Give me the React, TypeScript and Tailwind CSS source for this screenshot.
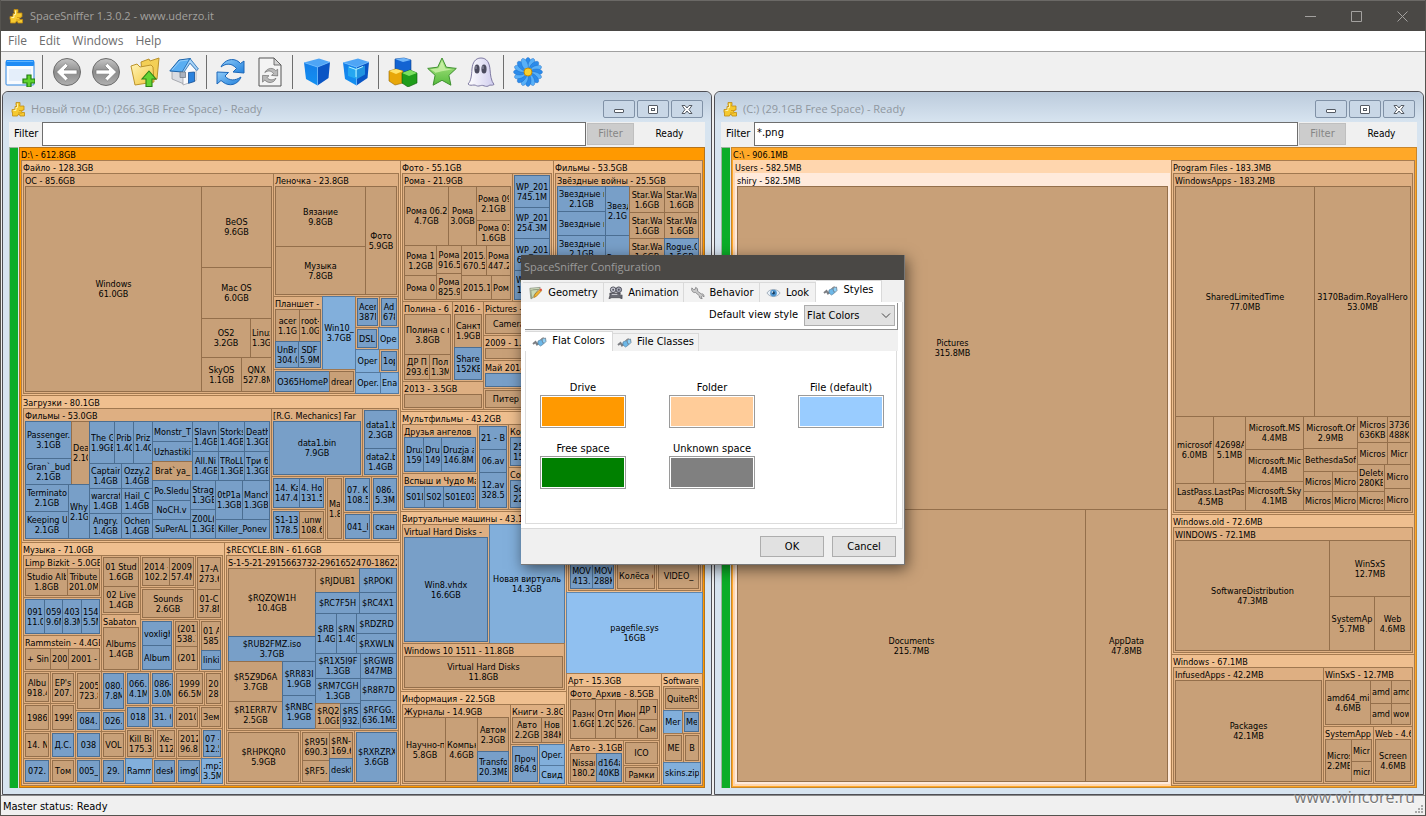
import React, { ReactNode } from 'react'
import clsx from 'clsx'

// ---------------------------------------------------------------- tree map

type Kind = 'row' | 'col' | 'box' | 'dir' | 'file'

interface Cell {
  kind: Kind
  size: number
  name?: string
  bytes?: string
  kids?: Cell[]
  glow?: boolean
}

const row = (size: number, ...kids: Cell[]): Cell => ({ kind: 'row', size, kids })
const col = (size: number, ...kids: Cell[]): Cell => ({ kind: 'col', size, kids })
// expanded folder, an empty name leaves no room for the caption
const box = (size: number, name: string, kid: Cell): Cell => ({
  kind: 'box',
  size,
  name,
  kids: [kid],
})
const glow = (cell: Cell): Cell => ({ ...cell, glow: true })
const dir = (size: number, name = '', bytes = ''): Cell => ({
  kind: 'dir',
  size,
  name,
  bytes,
})
const file = (size: number, name = '', bytes = ''): Cell => ({
  kind: 'file',
  size,
  name,
  bytes,
})
const mdir = (size: number, name = '', bytes = '') =>
  box(size, '', dir(1, name, bytes))
const mfile = (size: number, name = '', bytes = '') =>
  box(size, '', file(1, name, bytes))

const BOX_TONES = [
  'bg-[#ff9900] border-[#b5741c]',
  'bg-[#efbf8f] border-[#a87c50]',
  'bg-[#deaf82] border-[#a07850]',
  'bg-[#deaf82] border-[#987048]',
]
const GLOW_TONES = [
  'bg-[#ffa828] border-[#c8862c]',
  'bg-[#ffd6ae] border-[#ffd6ae]',
  'bg-[#ffeadb] border-[#ffeadb]',
  'bg-[#ffeadb] border-[#ffeadb]',
]
const FILE_TONES = [
  'bg-[#90c0f0] border-[#5f85ab]',
  'bg-[#90c0f0] border-[#5f85ab]',
  'bg-[#82afdb] border-[#54799f]',
  'bg-[#789fc8] border-[#4b6e92]',
]

const tracks = (kids: Cell[]) =>
  kids.map((k) => `minmax(0,${k.size}fr)`).join(' ')

const TreeCell = ({ cell, depth }: { cell: Cell; depth: number }) => {
  const level = Math.min(depth, 3)
  const kids = cell.kids ?? []

  if (cell.kind === 'row' || cell.kind === 'col') {
    return (
      <div
        className="grid min-h-0 min-w-0"
        style={
          cell.kind === 'row'
            ? {
                gridTemplateColumns: tracks(kids),
                gridTemplateRows: 'minmax(0,1fr)',
              }
            : {
                gridTemplateRows: tracks(kids),
                gridTemplateColumns: 'minmax(0,1fr)',
              }
        }
      >
        {kids.map((k, i) => (
          <TreeCell key={i} cell={k} depth={depth} />
        ))}
      </div>
    )
  }

  if (cell.kind === 'box') {
    return (
      <div
        className={clsx(
          '-mt-px -ml-px flex min-h-0 min-w-0 flex-col border pr-px pb-px',
          cell.name ? 'pt-0' : 'pt-px',
          cell.glow ? GLOW_TONES[level] : BOX_TONES[level],
        )}
      >
        {cell.name && (
          <div className="h-3 shrink-0 overflow-hidden pl-px leading-[14px] whitespace-nowrap">
            {cell.name}
          </div>
        )}
        <div className="grid min-h-0 flex-1 grid-cols-[minmax(0,1fr)] grid-rows-[minmax(0,1fr)] pt-px pl-0.5">
          <TreeCell cell={kids[0]} depth={depth + 1} />
        </div>
      </div>
    )
  }

  return (
    <div
      className={clsx(
        '-mt-px -ml-px flex min-h-0 min-w-0 flex-col justify-center overflow-hidden border px-px',
        cell.kind === 'file'
          ? FILE_TONES[level]
          : 'border-[#946f4b] bg-[#c8a078]',
      )}
    >
      {cell.name && (
        <div className="overflow-hidden text-center whitespace-nowrap">
          {cell.name}
          {cell.bytes && (
            <>
              <br />
              {cell.bytes}
            </>
          )}
        </div>
      )}
    </div>
  )
}

const files1 = box(
  235,
  'Файло - 128.3GB',
  row(
    1,
    box(
      250,
      'ОС - 85.6GB',
      row(
        1,
        dir(176, 'Windows', '61.0GB'),
        col(
          70,
          dir(81, 'BeOS', '9.6GB'),
          dir(51, 'Mac OS', '6.0GB'),
          row(39, dir(49, 'OS2', '3.2GB'), dir(21, 'Linux', '1.3GB')),
          row(34, dir(40, 'SkyOS', '1.1GB'), dir(30, 'QNX', '527.8M')),
        ),
      ),
    ),
    col(
      125,
      box(
        123,
        'Леночка - 23.8GB',
        row(
          1,
          col(90, dir(60, 'Вязание', '9.8GB'), dir(48, 'Музыка', '7.8GB')),
          dir(31, 'Фото', '5.9GB'),
        ),
      ),
      row(
        97,
        col(
          82,
          row(
            73,
            box(
              49,
              'Планшет -',
              col(
                1,
                row(32, dir(24, 'acer', '1.1G'), dir(21, 'root-', '1.0G')),
                row(26, file(23, 'UnBr', '304.0'), file(22, 'SDF', '5.9M')),
              ),
            ),
            file(33, 'Win10_', '3.7GB'),
          ),
          box(24, '', row(1, file(54, 'O365HomeP'), dir(24, 'dream'))),
        ),
        col(
          43,
          row(31, mfile(24, 'Acer', '387M'), mfile(19, 'Ad', '678')),
          row(22, mfile(23, 'DSL'), file(20, 'Oper')),
          row(23, file(24, 'Oper'), mfile(19, '1op')),
          row(21, file(25, 'Oper.'), file(18, 'Ena')),
        ),
      ),
    ),
  ),
)

const downloads = box(
  147,
  'Загрузки - 80.1GB',
  row(
    1,
    box(
      248,
      'Фильмы - 53.0GB',
      row(
        1,
        col(
          64,
          row(
            63,
            col(46, file(37, 'Passenger.', '3.1GB'), file(26, 'Gran`_bud', '2.1GB')),
            dir(18, 'Dea', '2.1G'),
          ),
          row(
            54,
            col(43, file(27, 'Terminato', '2.1GB'), file(27, 'Keeping U', '2.1GB')),
            file(21, 'Why', '2.1G'),
          ),
        ),
        col(
          63,
          row(
            42,
            file(25, 'The G', '1.9GB'),
            file(19, 'Prib', '1.4G'),
            file(19, 'Priz', '1.4G'),
          ),
          row(25, file(32, 'Captain', '1.4GB'), file(31, 'Ozzy.2', '1.4GB')),
          row(25, file(32, 'warcraf', '1.4GB'), file(31, 'Hail_C', '1.4GB')),
          row(25, file(32, 'Angry.', '1.4GB'), file(31, 'Ochen', '1.4GB')),
        ),
        col(
          117,
          row(
            59,
            col(40, file(20, 'Monstr_T'), file(20, 'Uzhastiki'), dir(19, 'Brat`ya_')),
            col(
              77,
              row(
                30,
                file(26, 'Slavn', '1.4GB'),
                file(26, 'Storks', '1.4GB'),
                file(25, 'Death', '1.3GB'),
              ),
              row(
                29,
                file(26, 'All.Ni', '1.4GB'),
                file(26, 'TRoLL', '1.3GB'),
                file(25, 'Три б', '1.3GB'),
              ),
            ),
          ),
          row(
            58,
            col(38, file(20, 'Po.Sledu'), file(19, 'NoCH.v'), file(19, 'SuPerAL')),
            col(25, file(29, 'Strag', '1.3GB'), file(29, 'Z00L(', '1.3GB')),
            col(
              54,
              row(39, file(27, '0tP1a', '1.3GB'), file(27, 'Manch', '1.3GB')),
              file(19, 'Killer_Ponev'),
            ),
          ),
        ),
      ),
    ),
    col(
      127,
      row(
        68,
        box(91, '[R.G. Mechanics] Far', file(1, 'data1.bin', '7.9GB')),
        box(36, '', col(1, file(38, 'data1.b', '2.3GB'), file(26, 'data2.b', '1.4GB'))),
      ),
      row(
        64,
        col(
          54,
          box(33, '', row(1, file(26, '14. Ka', '147.4'), file(24, '4. Ho', '131.5'))),
          box(31, '', row(1, file(26, 'S1-13', '178.5'), dir(24, '.unw', '108.6'))),
        ),
        mdir(18, 'Ma', '1.8'),
        col(28, mfile(36, '07. K', '108.5'), mfile(28, '041_H')),
        col(27, mfile(36, '086.', '5.3M'), mfile(28, 'скан')),
      ),
    ),
  ),
)

const music = box(
  203,
  'Музыка - 71.0GB',
  col(
    1,
    row(
      116,
      col(
        78,
        box(
          42,
          'Limp Bizkit - 5.0GB',
          row(1, dir(42, 'Studio Alb', '1.8GB'), dir(32, 'Tribute', '201.0M')),
        ),
        box(
          38,
          '',
          row(
            1,
            file(19, '091', '11.0'),
            file(18, '059', '9.6M'),
            file(19, '403', '8.3M'),
            file(18, '154', '5.5M'),
          ),
        ),
        box(
          36,
          'Rammstein - 4.4GB',
          row(1, dir(25, '+ Sin'), dir(18, '200'), dir(31, '2001 -')),
        ),
      ),
      col(
        39,
        box(59, '', col(1, dir(29, '01 Stud', '1.6GB'), dir(26, '02 Live', '1.4GB'))),
        box(57, 'Sabaton', dir(1, 'Albums', '1.4GB')),
      ),
      col(
        82,
        row(
          64,
          col(
            55,
            box(32, '', row(1, dir(27, '2014 -', '102.2'), dir(24, '2009', '57.4M'))),
            mdir(32, 'Sounds', '2.6GB'),
          ),
          box(27, '', col(1, dir(32, '17-A', '273.6'), dir(28, '01-C', '37.8M'))),
        ),
        row(
          52,
          box(33, '', col(1, file(24, 'voxligh'), file(24, 'Album'))),
          box(26, '', col(1, dir(25, '(201', '538.1'), dir(23, '(201'))),
          box(23, '', col(1, dir(29, '01 A', '585'), file(19, 'linki'))),
        ),
      ),
    ),
    row(
      112,
      col(
        52,
        row(32, mdir(27, 'Albu', '918.4'), mdir(25, "EP's", '207.5')),
        row(28, mdir(27, '1986'), mdir(25, '1999')),
        row(27, mdir(27, '14. N'), mfile(25, 'Д.С.')),
        row(25, mfile(27, '072.'), mdir(25, 'Том')),
      ),
      col(
        50,
        row(39, mdir(26, '2005', '723.8'), mfile(24, '080.', '7.8M')),
        row(21, mfile(26, '084.'), mfile(24, '026.')),
        row(27, mfile(26, '038'), mdir(24, 'VOL')),
        row(25, mfile(26, '005_'), mfile(24, '29.')),
      ),
      col(
        97,
        row(
          34,
          mfile(25, '066.', '4.1M'),
          mfile(24, '086-', '3.0M'),
          mdir(30, '1999', '66.5M'),
          mdir(18, '20', '28'),
        ),
        row(23, mfile(25, '018'), mfile(24, '31. C'), mdir(25, '2010'), mdir(23, 'Зем')),
        row(
          30,
          mdir(30, 'Kill Bi', '175.3'),
          mdir(21, 'Xe-', '112'),
          mdir(25, '2012', '96.8'),
          mfile(21, '07 -', '12.5'),
        ),
        row(25, file(27, 'Ramm'), mfile(24, 'desk'), mfile(25, 'img0'), file(21, '.mp3', '3.5M')),
      ),
    ),
  ),
)

const recycle = box(
  176,
  '$RECYCLE.BIN - 61.6GB',
  col(
    1,
    box(
      175,
      'S-1-5-21-2915663732-2961652470-18622',
      row(
        1,
        col(
          87,
          dir(68, '$RQZQW1H', '10.4GB'),
          file(25, '$RUB2FMZ.iso', '3.7GB'),
          row(
            67,
            col(54, dir(40, '$R5Z9D6A', '3.7GB'), dir(27, '$R1ERR7V', '2.5GB')),
            col(33, file(34, '$RR83I', '1.9GB'), file(33, '$RNBC', '1.9GB')),
          ),
        ),
        col(
          81,
          row(24, dir(44, '$RJDUB1'), file(37, '$RPOKI')),
          row(21, file(44, '$RC7F5H'), file(37, '$RC4X1')),
          row(
            40,
            file(21, '$RB', '1.4G'),
            file(20, '$RN', '1.4G'),
            col(40, file(20, '$RDZRD'), file(20, '$RXWLN')),
          ),
          row(
            75,
            col(
              45,
              file(25, '$R1X5I9F', '1.3GB'),
              file(25, '$RM7CGH', '1.3GB'),
              row(25, dir(25, '$RQ2', '1.0GB'), file(20, '$RS', '932.')),
            ),
            col(
              36,
              file(25, '$RGWB', '847MB'),
              file(22, '$R8R7D'),
              file(28, '$RFGG.', '636.1MB'),
            ),
          ),
        ),
      ),
    ),
    row(
      53,
      mdir(74, '$RHPKQR0', '5.9GB'),
      box(
        54,
        '',
        row(
          1,
          col(27, dir(28, '$R95I', '690.3'), dir(21, '$RF5.')),
          col(23, dir(26, '$RN-', '169.6'), file(23, 'deskt')),
        ),
      ),
      mfile(44, '$RXRZRX', '3.6GB'),
    ),
  ),
)

const photos = box(
  153,
  'Фото - 55.1GB',
  col(
    1,
    row(
      128,
      box(
        110,
        'Рома - 21.9GB',
        col(
          1,
          row(
            59,
            dir(44, 'Рома 06.2', '4.7GB'),
            dir(28, 'Рома', '3.0GB'),
            col(34, dir(34, 'Рома 09', '2.1GB'), dir(25, 'Рома 03', '1.6GB')),
          ),
          row(
            54,
            col(32, dir(30, 'Рома 1', '1.2GB'), dir(24, 'Рома 0')),
            col(25, dir(28, 'Рома', '916.5'), dir(26, 'Рома', '825.9')),
            col(
              49,
              row(30, dir(25, '2015.', '670.5'), dir(24, 'Рома', '447.2')),
              row(24, dir(30, '2015.1'), dir(19, 'Ром')),
            ),
          ),
        ),
      ),
      box(
        39,
        '',
        col(
          1,
          file(32, 'WP_201', '745.1M'),
          file(31, 'WP_201', '254.3M'),
          file(32, 'WP_201', '61.4MB'),
          file(29, 'WP_201', '12.8MB'),
        ),
      ),
    ),
    row(
      108,
      col(
        81,
        row(
          80,
          box(
            50,
            'Полина - 6',
            col(
              1,
              dir(40, 'Полина с п', '3.8GB'),
              row(25, dir(25, 'ДР П', '293.6'), dir(21, 'Пол', '1.3M')),
            ),
          ),
          box(31, '2016 -', col(1, dir(33, 'Санкт', '1.9GB'), file(32, 'Share', '152KB'))),
        ),
        box(28, '2013 - 3.5GB', dir(1)),
      ),
      col(
        68,
        box(34, 'Pictures -', dir(1, 'Camera Roll')),
        box(25, '2009 - 1.1GB', dir(1)),
        box(28, 'Май 2014', file(1)),
        mdir(21, 'Питер 2014'),
      ),
    ),
  ),
)

const movies = box(
  149,
  'Фильмы - 53.5GB',
  col(
    1,
    box(
      108,
      'Звёздные войны - 25.5GB',
      row(
        1,
        col(
          48,
          file(25, 'Звездные в', '2.1GB'),
          file(24, 'Звездные в'),
          file(27, 'Звездные в', '2.1GB'),
          file(17),
        ),
        col(24, file(49, 'Звезд', '2.1G'), file(44, 'Звезд')),
        col(
          69,
          row(26, dir(35, 'Star.Wa', '1.6GB'), dir(34, 'Star.Wa', '1.6GB')),
          row(26, dir(35, 'Star.Wa', '1.6GB'), dir(34, 'Star.Wa', '1.6GB')),
          row(26, dir(35, 'Star.Wa', '1.6GB'), file(34, 'Rogue.O', '1.5GB')),
          row(15, dir(35), dir(34)),
        ),
      ),
    ),
    box(128, '', row(1, dir(80), file(61))),
  ),
)

const rightHalf = col(
  302,
  row(251, photos, movies),
  row(
    374,
    col(
      166,
      box(
        100,
        'Мультфильмы - 43.2GB',
        row(
          1,
          col(
            75,
            box(
              49,
              'Друзья ангелов',
              row(
                1,
                file(19, 'Druz', '159'),
                file(18, 'Dru', '149'),
                file(34, 'Druzja a', '146.8M'),
              ),
            ),
            box(
              36,
              'Вспыш и Чудо Ма',
              row(1, file(20, 'S01E'), file(19, 'S02'), file(32, 'S01E03')),
            ),
          ),
          box(
            31,
            '',
            col(1, file(23, '21 - В'), file(23, '06.av'), file(35, '12.av', '328.5')),
          ),
          col(
            56,
            box(43, 'Кот', row(1, file(16, '25', '15'), file(36))),
            box(42, 'Соб', row(1, file(16, 'So', '22'), file(36))),
          ),
        ),
      ),
      box(
        180,
        'Виртуальные машины - 43.1GB',
        col(
          1,
          row(
            119,
            box(87, 'Virtual Hard Disks -', file(1, 'Win8.vhdx', '16.6GB')),
            file(75, 'Новая виртуаль', '14.3GB'),
          ),
          box(46, 'Windows 10 1511 - 11.8GB', dir(1, 'Virtual Hard Disks', '11.8GB')),
        ),
      ),
      box(
        94,
        'Информация - 22.5GB',
        row(
          1,
          box(
            108,
            'Журналы - 14.9GB',
            row(
              1,
              dir(41, 'Научно-п', '5.8GB'),
              dir(32, 'Компью', '4.6GB'),
              col(31, dir(34, 'Автом', '2.3GB'), file(30, 'Transfo', '20.3MB')),
            ),
          ),
          col(
            54,
            box(40, 'Книги - 3.8GB', row(1, dir(29, 'Авто', '2.2GB'), dir(21, 'Нов', '384K'))),
            row(
              39,
              mfile(29, 'Проч', '864.9'),
              col(25, file(21, 'Oper.'), file(18, 'Свид')),
            ),
          ),
        ),
      ),
    ),
    col(
      136,
      box(
        181,
        '',
        col(
          1,
          file(149),
          row(
            29,
            box(47, '', row(1, file(22, 'MOV', '413.'), file(21, 'MOV', '288K'))),
            mdir(41, 'Колёса о'),
            mdir(44, 'VIDEO_'),
          ),
        ),
      ),
      file(81, 'pagefile.sys', '16GB'),
      row(
        112,
        box(
          95,
          'Арт - 15.3GB',
          col(
            1,
            box(
              54,
              'Фото_Архив - 8.5GB',
              row(
                1,
                dir(25, 'Разно', '1.6GB'),
                dir(20, 'Отп', '1.2GB'),
                dir(22, 'Июн', '526.1'),
                col(20, dir(20, 'ДР Т'), dir(19, 'Сам')),
              ),
            ),
            row(
              43,
              box(55, 'Авто - 3.1GB', row(1, dir(26, 'Nissan', '180.2'), file(25, 'd164a', '40KB'))),
              col(36, mdir(25, 'ICO'), mdir(18, 'Рамки')),
            ),
          ),
        ),
        box(
          41,
          'Software',
          col(
            1,
            mdir(24, 'QuiteRS'),
            row(23, file(19, 'Mer'), mfile(18, 'Me')),
            row(29, mdir(20, 'ME'), mdir(17, 'В')),
            file(21, 'skins.zip'),
          ),
        ),
      ),
    ),
  ),
)

const driveD = box(
  1,
  'D:\\ - 612.8GB',
  row(1, col(379, files1, downloads, row(243, music, recycle)), rightHalf),
)

const driveC = glow(
  box(
    1,
    'C:\\ - 906.1MB',
    row(
      1,
      glow(
        box(
          438,
          'Users - 582.5MB',
          glow(
            box(
              1,
              'shiry - 582.5MB',
              col(
                1,
                dir(323, 'Pictures', '315.8MB'),
                row(272, dir(348, 'Documents', '215.7MB'), dir(82, 'AppData', '47.8MB')),
              ),
            ),
          ),
        ),
      ),
      col(
        243,
        box(
          354,
          'Program Files - 183.3MB',
          box(
            1,
            'WindowsApps - 183.2MB',
            col(
              1,
              row(
                230,
                dir(139, 'SharedLimitedTime', '77.0MB'),
                dir(96, '3170Badim.RoyalHero', '53.0MB'),
              ),
              row(
                94,
                col(
                  70,
                  row(67, dir(38, 'microsoft', '6.0MB'), dir(32, '42698A', '5.1MB')),
                  dir(27, 'LastPass.LastPas', '4.5MB'),
                ),
                col(
                  58,
                  dir(33, 'Microsoft.MS', '4.4MB'),
                  dir(32, 'Microsoft.Mic', '4.4MB'),
                  dir(29, 'Microsoft.Sky', '4.1MB'),
                ),
                col(
                  54,
                  dir(32, 'Microsoft.Of', '2.9MB'),
                  dir(23, 'BethesdaSoft'),
                  row(20, dir(29, 'Micros'), dir(25, 'Micro')),
                  row(19, dir(29, 'Micros'), dir(25, 'Micro')),
                ),
                col(
                  53,
                  row(26, dir(30, 'Micros', '636KB'), dir(23, '3736', '488K')),
                  row(22, dir(30, 'Micros'), dir(23, 'Micr')),
                  row(
                    46,
                    col(27, dir(27, 'Delete', '280KB'), dir(19, 'Micros')),
                    col(26, dir(24, 'Micro'), dir(22, 'Micro')),
                  ),
                ),
              ),
            ),
          ),
        ),
        box(
          140,
          'Windows.old - 72.6MB',
          box(
            1,
            'WINDOWS - 72.1MB',
            row(
              1,
              dir(154, 'SoftwareDistribution', '47.3MB'),
              col(
                81,
                dir(56, 'WinSxS', '12.7MB'),
                row(54, dir(45, 'SystemAp', '5.7MB'), dir(36, 'Web', '4.6MB')),
              ),
            ),
          ),
        ),
        box(
          131,
          'Windows - 67.1MB',
          row(
            1,
            box(150, 'InfusedApps - 42.2MB', dir(1, 'Packages', '42.1MB')),
            col(
              89,
              box(
                59,
                'WinSxS - 12.7MB',
                row(
                  1,
                  dir(45, 'amd64_mi', '4.6MB'),
                  col(21, dir(23, 'amd'), dir(21, 'amd')),
                  col(19, dir(23, 'amd'), dir(21, 'wow')),
                ),
              ),
              row(
                57,
                box(
                  50,
                  'SystemApp',
                  row(1, dir(26, 'Micros', '2.2MB'), col(20, dir(22, 'Micr'), dir(20, 'micr'))),
                ),
                box(39, 'Web - 4.6', dir(1, 'Screen', '4.6MB')),
              ),
            ),
          ),
        ),
      ),
    ),
  ),
)

// ------------------------------------------------------------------- icons

const PuzzleIcon = () => (
  <svg width="15" height="16" viewBox="0 0 15 16" aria-hidden="true">
    <path
      d="M4 5.500h2L5 4V1.500h4V4L8.500 5H13v4h-1.500l-1 1 .5 1.500h2.500V15H9l-.5-1.500H7L6.500 15H1.500v-3.500H1V8.500h2L4 8z"
      fill="#f5c92f"
      stroke="#c08b12"
      strokeWidth=".8"
    />
    <path d="M6.500 2.500v4H5v3H2.500" fill="none" stroke="#fff3a8" />
    <path d="M7 12h4M8 9.500h4" fill="none" stroke="#d69d18" />
  </svg>
)

const NewViewIcon = () => (
  <>
    <rect x="1" y="4" width="28" height="24" rx="1" fill="#f8fbfe" stroke="#2f86e0" />
    <rect x="1" y="3" width="28" height="6" rx="1" fill="#1f8cf5" />
    <path d="M2 4.500h26" stroke="#5fb4ff" />
    <path d="M4 12h22v12H4z" fill="#e4eefa" />
    <path
      d="M22 18h4v4h4v4h-4v4h-4v-4h-4v-4h4z"
      fill="#5fd32f"
      stroke="#1f7d12"
      strokeWidth="1.2"
    />
  </>
)

const ArrowIcon = ({ flip }: { flip?: boolean }) => (
  <g transform={flip ? 'matrix(-1 0 0 1 30 0)' : undefined}>
    <circle cx="15" cy="15" r="13.500" fill="url(#gray)" stroke="#6c6c6c" />
    <path
      d="M4.500 15 13.500 6.300l2.700 2.500-4.200 4.200H25v4.200H12l4.200 4.200-2.700 2.500z"
      fill="#fff"
      stroke="#777"
      strokeWidth=".7"
    />
  </g>
)

const FolderUpIcon = () => (
  <>
    <path d="M11 5l8-3 1 2 9-3-2 21-14 3z" fill="#f3cf55" stroke="#b9912c" />
    <path d="M1 9l6-2 3 3 11-2 2 2 1 15-19 3z" fill="url(#folder)" stroke="#bd942b" />
    <path
      d="M19 14l7 8h-4v7.500h-6V22h-4z"
      fill="#63d433"
      stroke="#2a8216"
      strokeWidth="1.100"
    />
  </>
)

const HomeIcon = () => (
  <>
    <path d="M3 13h12v14L3 22z" fill="#d9dce2" stroke="#8c8f96" strokeWidth=".7" />
    <path d="M14 14l7-8 6 7v10.500L14 28z" fill="#fafafc" stroke="#9799a0" strokeWidth=".7" />
    <path d="M.8 14 10 3l11.500-1.500L13.500 15z" fill="#5aaef2" stroke="#1c62a8" />
    <path d="M3 13l8-9 8-1" fill="none" stroke="#a6d6fb" strokeWidth=".8" />
    <path
      d="M21 1.500 29.400 12l-1.700 1.500L21 6.200 14.700 15.500l-1.400-.700z"
      fill="#a8d4f8"
      stroke="#1f69b2"
      strokeWidth=".8"
    />
    <path d="M19.500 15.500 25.500 15v9.500l-6 1.800z" fill="#2c83de" stroke="#134f95" strokeWidth=".8" />
    <path d="M11 15h5.500v5.500H11z" fill="#aab2bf" stroke="#6f7580" strokeWidth=".7" />
  </>
)

const RefreshPaths = () => (
  <>
    <path
      d="M5 10C8 3 17 0 23 5l1.500 1.500L28 4v12l-11-1 3.500-3.500C16 6 10 6 5 10z"
      strokeWidth="1"
    />
    <path
      d="M25 20c-3 8-12 10-18 5l-2-1.500L1 27V15l11.500.500L9 19c4 5 10 5 16 1z"
      strokeWidth="1"
    />
  </>
)

const CubePaths = () => (
  <>
    <path d="M2 5.500 17 1.500l11 3.500-12.500 5z" fill="#4fa5f5" />
    <path d="M2 5.500l13.500 4.500v18.500L4 22z" fill="url(#cubeL)" />
    <path d="M28 5l-12.500 5v18.500L26.500 21z" fill="#0a55c4" />
    <path d="M2 5.500l13.500 4.500L28 5M15.500 10v18" fill="none" stroke="#6dbcff" strokeWidth=".8" />
  </>
)

const GhostIcon = () => (
  <>
    <path
      d="M15 1C9 1 6.500 6 6 12c-.5 7-1 12-4 15 2 2 4 1 6 1s3 1.500 5 1 3-1 5-.2 4 .8 5-.3 3 .5 5-1c-3-4-3.500-9-4-15C23.500 6 21 1 15 1z"
      fill="url(#ghost)"
      stroke="#7f7aa2"
    />
    <ellipse cx="11" cy="12" rx="2.600" ry="4.600" fill="#4b4b5e" />
    <ellipse cx="18" cy="12" rx="2.600" ry="4.600" fill="#4b4b5e" />
    <path d="M10 9v3M17 9v3" stroke="#9b9bb2" />
  </>
)

const FlowerIcon = () => (
  <>
    {Array.from({ length: 16 }, (_, i) => (
      <ellipse
        key={i}
        cx="15"
        cy="6.500"
        rx="3"
        ry="6"
        fill={i % 2 ? '#58b0f8' : '#2b8bea'}
        stroke="#1a68c4"
        strokeWidth=".4"
        transform={`rotate(${i * 22.5} 15 15)`}
      />
    ))}
    <circle cx="15" cy="15" r="4" fill="#f8cf2c" stroke="#c38b0c" />
  </>
)

const TOOLS: { label: string; sep?: boolean; art: ReactNode }[] = [
  { label: 'New view', art: <NewViewIcon /> },
  { label: 'Back', sep: true, art: <ArrowIcon /> },
  { label: 'Forward', art: <ArrowIcon flip /> },
  { label: 'Go to parent', art: <FolderUpIcon /> },
  { label: 'Home', art: <HomeIcon /> },
  {
    label: 'Rescan',
    sep: true,
    art: (
      <g fill="url(#sync)" stroke="#1c67b8">
        <RefreshPaths />
      </g>
    ),
  },
  {
    label: 'Rescan file',
    art: (
      <>
        <path d="M4 1h15l7 7v21H4z" fill="#f4f4f4" stroke="#555" />
        <path d="M19 1v7h7z" fill="#d4d4d4" stroke="#555" strokeWidth=".8" />
        <g
          fill="#b9b9b9"
          stroke="#555"
          strokeWidth="1.500"
          transform="translate(7 10) scale(.56)"
        >
          <RefreshPaths />
        </g>
      </>
    ),
  },
  { label: 'Less detail', sep: true, art: <CubePaths /> },
  {
    label: 'More detail',
    art: (
      <>
        <CubePaths />
        <path d="M7 9l8 2.500 9-3v9L16 22l-9-3z" fill="#30bdf4" opacity=".6" />
        <path d="M8 10l7 2.500V20M15 12.500l7-3" fill="none" stroke="#b4f0ff" />
      </>
    ),
  },
  {
    label: 'File classes',
    sep: true,
    art: (
      <>
        <path d="M7 2l9-1 7 2v10l-8 3-8-3z" fill="#1363d2" stroke="#0b3f8c" strokeWidth=".6" />
        <path d="M7 2l9-1 7 2-8 2z" fill="#71b6fa" />
        <path d="M1 14l7-2 7 2v12l-8 2-6-4z" fill="#e8a709" stroke="#966500" strokeWidth=".6" />
        <path d="M1 14l7-2 7 2-7 3z" fill="#ffe36a" />
        <path d="M14 16l8-3 7 3v10l-9 4-6-4z" fill="#1f9d1b" stroke="#0c5d0c" strokeWidth=".6" />
        <path d="M14 16l8-3 7 3-8 3z" fill="#7ce061" />
      </>
    ),
  },
  {
    label: 'Filter',
    art: (
      <>
        <path
          d="M15 1l4.300 9.200 10 1.200-7.400 6.900 2 9.900L15 23.300 6.100 28.200l2-9.900L.7 11.400l10-1.200z"
          fill="url(#star)"
          stroke="#3f9130"
          strokeLinejoin="round"
        />
        <path d="M15 4l3.300 7.500 7.500.900C19 13 10 15 5.500 17l3-1.500L3.500 12.300l8-1z" fill="#d5f5b4" opacity=".7" />
      </>
    ),
  },
  { label: 'Unknown space', art: <GhostIcon /> },
  { label: 'Configure', sep: true, art: <FlowerIcon /> },
]

const SvgDefs = () => (
  <svg width="0" height="0" className="absolute" aria-hidden="true">
    <defs>
      <linearGradient id="gray" x1="0" y1="0" x2="0" y2="1">
        <stop offset="0" stopColor="#c6c6c6" />
        <stop offset=".5" stopColor="#8d8d8d" />
        <stop offset="1" stopColor="#b0b0b0" />
      </linearGradient>
      <linearGradient id="folder" x1="0" y1="0" x2="1" y2="1">
        <stop offset="0" stopColor="#fff3b5" />
        <stop offset="1" stopColor="#f2c63c" />
      </linearGradient>
      <linearGradient id="sync" x1="0" y1="0" x2="1" y2="1">
        <stop offset="0" stopColor="#8ecaf8" />
        <stop offset="1" stopColor="#2382dc" />
      </linearGradient>
      <linearGradient id="cubeL" x1="0" y1="0" x2="0" y2="1">
        <stop offset="0" stopColor="#157ee8" />
        <stop offset="1" stopColor="#1391f2" />
      </linearGradient>
      <linearGradient id="ghost" x1="0" y1="0" x2="1" y2="0">
        <stop offset="0" stopColor="#ffffff" />
        <stop offset="1" stopColor="#cfccee" />
      </linearGradient>
      <linearGradient id="star" x1="0" y1="0" x2="0" y2="1">
        <stop offset="0" stopColor="#b4e88b" />
        <stop offset="1" stopColor="#55bb3c" />
      </linearGradient>
    </defs>
  </svg>
)

const StylesIcon = () => (
  <svg width="15" height="14" viewBox="0 0 15 14" aria-hidden="true">
    <path d="M1 9l2.500-2L5 9.500 7.500 7" fill="none" stroke="#7b7d82" strokeWidth="2" />
    <path d="M6 6l3.500-1.500L11.500 9 8.500 11 6 9z" fill="#6db8e8" stroke="#557f9f" strokeWidth=".7" />
    <path d="M10 4l3.500-1 .5 3.500L12 8.500l-1.500-2z" fill="#8fd0f5" stroke="#5d7385" strokeWidth=".7" />
    <path d="M8.500 4.500l3-2" stroke="#777" />
  </svg>
)

const GeometryIcon = () => (
  <svg width="15" height="14" viewBox="0 0 16 14" aria-hidden="true">
    <path d="M2 2l11-1-1 2-7 1-1 9H3z" fill="#d9e4c3" stroke="#76806c" strokeWidth=".7" />
    <path d="M4 13L3 4l8-1z" fill="#c9d9b4" stroke="#7d8b70" strokeWidth=".7" />
    <path d="M6 12l1.500-4L13 3l1.500 1.500L9 10.500z" fill="#f2b52e" stroke="#a07015" strokeWidth=".7" />
    <path d="M12 4l1.500-2 1.500 1-1 2z" fill="#e0503c" />
  </svg>
)

const AnimationIcon = () => (
  <svg width="15" height="14" viewBox="0 0 16 14" aria-hidden="true">
    <circle cx="5.500" cy="3.500" r="3" fill="#c7c8d2" stroke="#4c4d57" />
    <circle cx="11.500" cy="3.500" r="3" fill="#a4a6b4" stroke="#4c4d57" />
    <path d="M2 7h11v3l2-1v4l-3-1H4l-3 1 1-3z" fill="#6a6b74" stroke="#3e3f46" strokeWidth=".7" />
    <path d="M4 8.500h6" stroke="#d2d3da" />
    <circle cx="5.500" cy="3.500" r="1" fill="#50515c" />
    <circle cx="11.500" cy="3.500" r="1" fill="#50515c" />
  </svg>
)

const BehaviorIcon = () => (
  <svg width="15" height="14" viewBox="0 0 16 14" aria-hidden="true">
    <path
      d="M2 1.500l2 2 1.500-.500L6 1c2 .500 2.500 2.500 2 4l4 3c2-.500 3 1 3 3l-2-1-1 1 1 2c-2 0-3.500-1-3-3L6 6.500C3.500 7 1 5 2 1.500z"
      fill="#c9c9c9"
      stroke="#77777a"
      strokeWidth=".8"
    />
  </svg>
)

const LookIcon = () => (
  <svg width="15" height="14" viewBox="0 0 16 14" aria-hidden="true">
    <path d="M1 7c3-5 11-5 14 0-3 5-11 5-14 0z" fill="#e7f0f8" stroke="#8c9aa8" strokeWidth=".8" />
    <circle cx="8" cy="7" r="3.600" fill="#4f95cf" />
    <circle cx="8" cy="7" r="1.500" fill="#173b5c" />
    <circle cx="6.800" cy="5.800" r=".8" fill="#fff" />
  </svg>
)

// ----------------------------------------------------------------- windows

const CHILD_BUTTONS = [
  { label: 'Minimize', art: <rect x="1.500" y="5.500" width="9" height="3" rx=".5" /> },
  {
    label: 'Maximize',
    art: (
      <>
        <rect x="1.500" y="1.500" width="9" height="8" rx=".5" />
        <rect x="4.500" y="4.500" width="3" height="2" />
      </>
    ),
  },
  {
    label: 'Close',
    art: <path d="M1 1.500h3l2 2.500 2-2.500h3L8 5.500l3 4H8L6 7l-2 2.500H1l3-4z" />,
  },
]

interface ChildWindowProps {
  title: string
  filter: string
  drive: Cell
  id: string
}

const ChildWindow = ({ title, filter, drive, id }: ChildWindowProps) => (
  <section className="flex min-w-0 flex-1 flex-col rounded-t-md border border-[#4f4f55] bg-[#d7e4f0] px-1.5 pb-1.5">
    <header className="-mx-1.5 flex h-[30px] shrink-0 items-center rounded-t-md bg-linear-to-b from-[#bccbdc] to-[#d7e4f0] px-2 pt-1">
      <PuzzleIcon />
      <h2 className="ml-[5px] flex-1 truncate font-['Open_Sans','Noto_Sans',sans-serif] text-[11px] text-[#8f979f]">
        {title}
      </h2>
      <div className="flex gap-0.5">
        {CHILD_BUTTONS.map((b) => (
          <button
            key={b.label}
            aria-label={b.label}
            className="flex h-[18px] w-8 items-center justify-center rounded-[2px] border border-[#8091a6] bg-[#c9d7e6]"
          >
            <svg width="12" height="11" viewBox="0 0 12 11" fill="#fff" stroke="#555b64">
              {b.art}
            </svg>
          </button>
        ))}
      </div>
    </header>
    <div className="flex h-[25px] shrink-0 items-start bg-[#f0f0f0]">
      <label htmlFor={id} className="w-[33px] pt-1 pl-[5px] leading-4">
        Filter
      </label>
      <input
        id={id}
        defaultValue={filter}
        className="h-6 min-w-0 flex-1 border border-[#6e6e6e] bg-white px-0.5 pb-1 outline-none"
      />
      <button disabled className="mt-px ml-px h-[22px] w-[47px] border border-[#bfbfbf] bg-[#cccccc] text-[#868686]">
        Filter
      </button>
      <span className="w-[71px] pt-1 text-center text-[10px] leading-4">Ready</span>
    </div>
    <div className="flex min-h-0 flex-1">
      <div className="mr-px w-[9px] shrink-0 border-t border-l border-[#9fb39f] bg-[#0cad28]" />
      <div className="grid min-w-0 flex-1 grid-cols-[minmax(0,1fr)] grid-rows-[minmax(0,1fr)] pt-px pl-px text-[9px] leading-[10px]">
        <TreeCell cell={drive} depth={0} />
      </div>
    </div>
  </section>
)

// ------------------------------------------------------------------ dialog

const TABS = [
  { label: 'Geometry', width: 'w-[81px]', icon: <GeometryIcon /> },
  { label: 'Animation', width: 'w-20', icon: <AnimationIcon /> },
  { label: 'Behavior', width: 'w-[76px]', icon: <BehaviorIcon /> },
  { label: 'Look', width: 'w-14', icon: <LookIcon /> },
  { label: 'Styles', width: 'w-[66px]', icon: <StylesIcon />, active: true },
]

const STYLE_TABS = [
  { label: 'Flat Colors', icon: <StylesIcon />, active: true },
  { label: 'File Classes', icon: <StylesIcon /> },
]

const SWATCHES = [
  { label: 'Drive', color: 'bg-[#ff9900]' },
  { label: 'Folder', color: 'bg-[#ffcc99]' },
  { label: 'File (default)', color: 'bg-[#99ccff]' },
  { label: 'Free space', color: 'bg-[#008000]' },
  { label: 'Unknown space', color: 'bg-[#808080]' },
]

const ConfigDialog = () => (
  <div
    role="dialog"
    aria-label="SpaceSniffer Configuration"
    className="absolute top-[255px] left-1/2 -ml-48 flex w-96 flex-col border-r border-b border-[#777] bg-[#f0f0f0] shadow-[2px_4px_14px_rgba(0,0,0,0.55)]"
  >
    <h2 className="flex h-[25px] items-center bg-[#4a4845] px-[3px] font-['Open_Sans','Noto_Sans',sans-serif] text-[11px] text-[#9a9a9a]">
      SpaceSniffer Configuration
    </h2>
    <div role="tablist" className="flex h-[22px] items-end pl-0.5">
      {TABS.map((t) => (
        <button
          key={t.label}
          role="tab"
          aria-selected={!!t.active}
          className={clsx(
            'flex items-center justify-center gap-[5px] border-t border-r border-[#d9d9d9]',
            t.width,
            t.active ? 'h-[22px] bg-white pb-0.5' : 'h-5 bg-[#f2f2f2] pt-px',
          )}
        >
          {t.icon}
          {t.label}
        </button>
      ))}
    </div>
    <div className="mr-px flex flex-col border-r border-b border-[#d9d9d9] bg-white px-1 pb-1">
      <div className="mt-px flex h-[27px] items-start justify-end gap-1.5 border-r border-b border-[#8f8f8f] pr-0.5">
        <label htmlFor="view-style" className="pt-0.5 leading-5">
          Default view style
        </label>
        <div className="relative mt-0.5">
          <select
            id="view-style"
            className="h-[21px] w-[91px] appearance-none border border-[#adadad] bg-[#e1e1e1] pt-0.5 pl-0.5 outline-none"
          >
            <option>Flat Colors</option>
            <option>File Classes</option>
          </select>
          <svg
            className="pointer-events-none absolute top-2 right-1"
            width="10"
            height="6"
            viewBox="0 0 10 6"
            fill="none"
            stroke="#444"
          >
            <path d="M1 .500l4 4 4-4" />
          </svg>
        </div>
      </div>
      <div role="tablist" className="flex h-[21px] items-end bg-[#f0f0f0]">
        {STYLE_TABS.map((t) => (
          <button
            key={t.label}
            role="tab"
            aria-selected={!!t.active}
            className={clsx(
              'flex items-center justify-center gap-[5px] border-t border-r border-[#d9d9d9]',
              t.active ? 'h-5 w-[88px] bg-white' : 'h-[18px] w-[86px] bg-[#f2f2f2]',
            )}
          >
            {t.icon}
            {t.label}
          </button>
        ))}
      </div>
      <div className="mr-px grid h-[173px] grid-cols-[repeat(3,86px)] content-start gap-x-[43px] gap-y-[13px] border border-t-0 border-[#dcdcdc] pt-[29px] pl-3.5">
        {SWATCHES.map((s) => (
          <div key={s.label} className="text-center">
            <span className="block h-[15px] leading-4">{s.label}</span>
            <button
              aria-label={s.label}
              className="block h-[33px] w-full border border-[#9a9a9a] p-px"
            >
              <span className={clsx('block size-full', s.color)} />
            </button>
          </div>
        ))}
      </div>
    </div>
    <div className="flex justify-end gap-2 pt-[7px] pr-2 pb-[7px]">
      {['OK', 'Cancel'].map((label) => (
        <button
          key={label}
          className="flex h-[21px] w-16 items-center justify-center border border-[#adadad] bg-[#e1e1e1] pt-px"
        >
          {label}
        </button>
      ))}
    </div>
  </div>
)

// --------------------------------------------------------------------- app

export default function App() {
  return (
    <div className="relative flex h-screen flex-col overflow-hidden border-x border-b border-[#55534f] bg-[#f0f0f0] font-['DejaVu_Sans_Condensed','DejaVu_Sans',sans-serif] text-[11px] text-black">
      <SvgDefs />
      <header className="flex h-[31px] shrink-0 items-center border-t border-[#6b6966] bg-[#4a4845] pl-2 font-['Open_Sans','Noto_Sans',sans-serif] text-[#a3a19f]">
        <PuzzleIcon />
        <h1 className="ml-1.5 flex-1 text-[11px]">SpaceSniffer 1.3.0.2 - www.uderzo.it</h1>
        {[
          { label: 'Minimize', d: 'M0 5.500h11' },
          { label: 'Maximize', d: 'M.5.500h10v10H.5z' },
          { label: 'Close', d: 'M.5.500l10 10M10.500.500l-10 10' },
        ].map((b) => (
          <button key={b.label} aria-label={b.label} className="flex w-[46px] justify-center">
            <svg width="11" height="11" viewBox="0 0 11 11" fill="none" stroke="#a3a19f">
              <path d={b.d} />
            </svg>
          </button>
        ))}
      </header>
      <nav className="flex h-5 shrink-0 items-center gap-3 bg-white px-[7px] font-['Open_Sans','Noto_Sans',sans-serif] text-[12px] text-[#6d6d6d]">
        {['File', 'Edit', 'Windows', 'Help'].map((m) => (
          <button key={m}>{m}</button>
        ))}
      </nav>
      <div className="-ml-px flex h-10 shrink-0 items-center border-t border-[#a0a0a0]">
        {TOOLS.map((t) => (
          <React.Fragment key={t.label}>
            {t.sep && <div className="mr-1 ml-[3px] h-[34px] w-px bg-[#6e6e6e]" />}
            <button aria-label={t.label} className="flex w-[39px] justify-center">
              <svg width="30" height="30" viewBox="0 0 30 30">
                {t.art}
              </svg>
            </button>
          </React.Fragment>
        ))}
      </div>
      <main className="flex min-h-0 flex-1 gap-0.5 px-px">
        <ChildWindow
          id="filter-d"
          title="Новый том (D:) (266.3GB Free Space) - Ready"
          filter=""
          drive={driveD}
        />
        <ChildWindow
          id="filter-c"
          title="(C:) (29.1GB Free Space) - Ready"
          filter="*.png"
          drive={driveC}
        />
      </main>
      <footer className="flex h-5 shrink-0 items-center border-t border-[#8a8a8a] pt-1 pl-0.5">
        Master status: Ready
      </footer>
      <ConfigDialog />
      <div className="absolute right-2.5 bottom-1.5 font-['Open_Sans','Noto_Sans',sans-serif] text-[16px] text-[#777777] [text-shadow:0_1px_1px_#fff]">
        www.wincore.ru
      </div>
      <svg
        className="absolute right-px bottom-px"
        width="10"
        height="10"
        viewBox="0 0 10 10"
        fill="#a8a8a8"
      >
        <path d="M7 1h2v2H7zM4 4h2v2H4zM7 4h2v2H7zM1 7h2v2H1zM4 7h2v2H4zM7 7h2v2H7z" />
      </svg>
    </div>
  )
}
